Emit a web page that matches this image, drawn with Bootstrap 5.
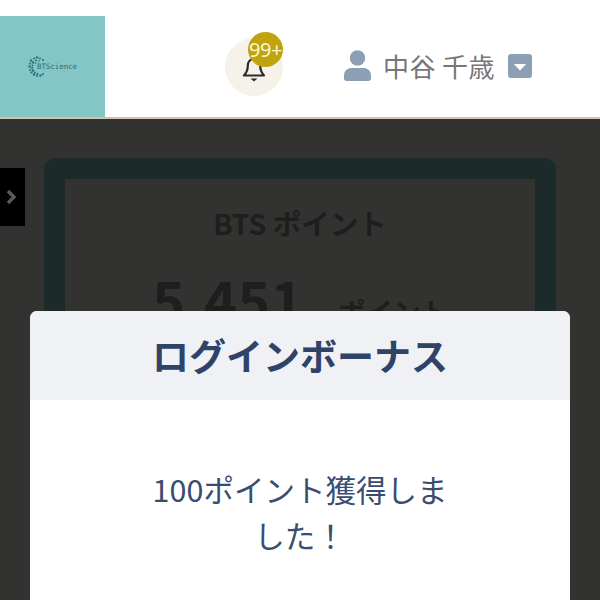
<!DOCTYPE html>
<html lang="ja">
<head>
    <meta charset="UTF-8">
    <meta name="viewport" content="width=device-width, initial-scale=1.0">
    <title>ログインボーナス</title>
    <link href="https://cdn.jsdelivr.net/npm/bootstrap@5.3.0/dist/css/bootstrap.min.css" rel="stylesheet">
    <style>
        html, body {
            height: 100%;
            overflow: hidden;
        }
        body {
            font-family: "Noto Sans CJK JP", "Noto Sans", sans-serif;
            background-color: #323230;
        }
        .top-bar {
            height: 119px;
            background-color: #fff;
            border-bottom: 2px solid #cfc3a8;
        }
        .logo-tile {
            width: 105px;
            height: 101px;
            margin-top: 16px;
            background-color: #84c5c5;
        }
        .logo-text {
            font-family: "DejaVu Sans Mono", monospace;
            font-size: 7.400px;
            line-height: 1;
            margin-left: -8px;
            color: #2f6f78;
        }
        .bell-wrap {
            width: 58px;
            height: 58px;
            margin-left: 120px;
            margin-top: 38px;
            padding-top: 5px;
            background-color: #f6f2ea;
        }
        .bell-count {
            top: -6px;
            left: 23px;
            width: 35px;
            height: 35px;
            background-color: #bfa40e;
            color: #fbf6d0;
            font-family: "Noto Sans", sans-serif;
            font-size: 20px;
            letter-spacing: -.5px;
        }
        .user-box {
            margin-left: 61px;
            margin-top: 50px;
            height: 31px;
            color: #777;
            font-size: 26px;
            line-height: 1;
        }
        .user-name {
            margin-left: 12px;
            margin-right: 13px;
            letter-spacing: .4px;
        }
        .side-tab {
            top: 168px;
            left: 0;
            width: 25px;
            height: 58px;
            padding: 0 3px 0 0;
            background-color: #000;
        }
        .point-card {
            margin: 39px 44px 0;
            height: 400px;
            border: 21px solid #1c2a2a;
            border-radius: 12px;
            padding-top: 20px;
            color: #1e1e1e;
        }
        .point-title {
            font-size: 28.500px;
            line-height: 48px;
        }
        .point-row {
            margin-top: 16px;
            line-height: 72px;
        }
        .point-value {
            font-size: 56px;
            letter-spacing: .3px;
        }
        .point-unit {
            font-size: 27.500px;
            margin-left: 34px;
        }
        .bonus-dialog {
            top: 311px;
            left: 30px;
            width: 540px;
            height: 400px;
            border-radius: 7px;
            color: #3a4c70;
        }
        .bonus-head {
            height: 89px;
            background-color: #eff1f5;
            border-radius: 7px 7px 0 0;
        }
        .bonus-title {
            font-size: 37px;
            color: #2f4368;
        }
        .bonus-msg {
            width: 310px;
            margin: 66px auto 0;
            font-size: 30.500px;
            line-height: 46px;
        }
    </style>
</head>
<body>
    <header class="top-bar d-flex align-items-start">
        <div class="logo-tile d-flex align-items-center justify-content-center">
            <svg width="17" height="21" viewBox="0 0 17 21" fill="#2f6f78">
                <circle cx="9" cy="1.500" r="1.300"/><circle cx="6" cy="2.500" r="1"/><circle cx="12" cy="2.500" r="1"/><circle cx="15" cy="4" r="1.100"/><circle cx="3" cy="4.500" r="1.200"/><circle cx="8" cy="4.500" r="1"/><circle cx="11" cy="5" r=".8"/>
                <circle cx="5" cy="6.500" r="1.200"/><circle cx="2" cy="7.500" r="1"/><circle cx="7.500" cy="7" r=".8"/><circle cx="1.500" cy="10.500" r="1.300"/><circle cx="4.500" cy="9.500" r="1"/><circle cx="4" cy="12" r="1.100"/><circle cx="2" cy="14" r="1"/>
                <circle cx="5" cy="14.500" r="1.200"/><circle cx="3.500" cy="16.500" r="1.100"/><circle cx="7" cy="16.500" r="1"/><circle cx="6" cy="18.500" r="1.200"/><circle cx="9.500" cy="18" r="1.100"/><circle cx="9" cy="20" r="1"/><circle cx="12.500" cy="19.500" r="1.200"/><circle cx="15" cy="18" r="1"/>
            </svg>
            <span class="logo-text">BTScience</span>
        </div>
        <div class="bell-wrap position-relative rounded-circle d-flex align-items-center justify-content-center">
            <svg width="24" height="25" viewBox="0 0 24 25" fill="none" stroke="#2b2b2b" stroke-width="2.200" stroke-linejoin="round">
                <path d="M12 2c-4 0-6.200 3-6.200 6.800 0 4.500-1.500 7.200-3.800 9.700h20c-2.300-2.500-3.800-5.200-3.800-9.700C18.200 5 16 2 12 2z"/>
                <path d="M8.500 21.500h7L12 24.500z" fill="#2b2b2b" stroke="none"/>
            </svg>
            <span class="bell-count position-absolute rounded-circle d-flex align-items-center justify-content-center">99+</span>
        </div>
        <div class="user-box d-flex align-items-center">
            <svg width="27" height="31" viewBox="0 0 27 31" fill="#8c9fb5">
                <circle cx="13.500" cy="8" r="7.700"/>
                <path d="M0 26c0-5.500 3.500-8 8-8h11c4.500 0 8 2.500 8 8v2.500c0 1.500-1 2.500-2.500 2.500h-22C1 31 0 30 0 28.500z"/>
            </svg>
            <span class="user-name">中谷 千歳</span>
            <svg width="24" height="24" viewBox="0 0 24 24">
                <rect width="24" height="24" rx="3" fill="#8c9fb5"/>
                <path d="M5.800 10h12.400L12 16.500z" fill="#fff"/>
            </svg>
        </div>
    </header>

    <button type="button" class="side-tab position-absolute border-0 d-flex align-items-center justify-content-center" aria-label="メニュー">
        <svg width="12" height="16" viewBox="0 0 12 16" fill="none" stroke="#5a5a5a" stroke-width="3.400">
            <path d="M3 2l6 6-6 6"/>
        </svg>
    </button>

    <main class="point-card text-center fw-bold">
        <div class="point-title">BTS ポイント</div>
        <div class="point-row">
            <span class="point-value">5,451</span><span class="point-unit">ポイント</span>
        </div>
    </main>

    <section class="bonus-dialog position-absolute bg-white text-center">
        <div class="bonus-head d-flex align-items-center justify-content-center">
            <h5 class="bonus-title fw-bold m-0">ログインボーナス</h5>
        </div>
        <p class="bonus-msg">100ポイント獲得しました！</p>
    </section>

    <script src="https://cdn.jsdelivr.net/npm/bootstrap@5.3.0/dist/js/bootstrap.bundle.min.js"></script>
</body>
</html>
